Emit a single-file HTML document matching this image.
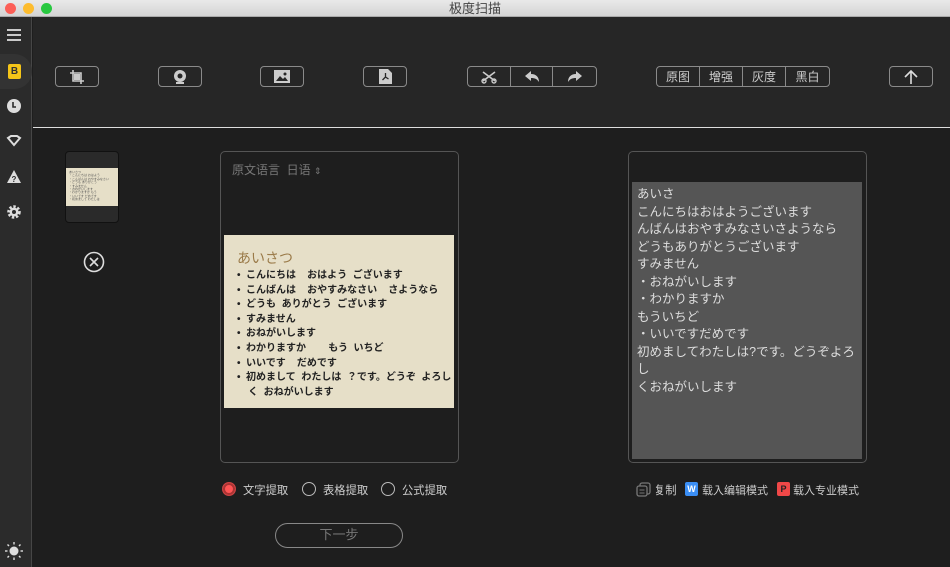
<!DOCTYPE html>
<html><head><meta charset="utf-8"><style>
*{margin:0;padding:0;box-sizing:border-box}
body{width:950px;height:567px;overflow:hidden;background:#1e1e1e;font-family:"Liberation Sans","Noto Sans CJK JP",sans-serif;position:relative}
.a{position:absolute}
.btn{position:absolute;top:66px;height:21px;border:1.5px solid #8a8a8a;border-radius:4px;display:flex;align-items:center;justify-content:center}
.seg{display:flex;align-items:center;justify-content:center;height:100%;border-right:1px solid #8a8a8a;color:#ccc;font-size:12px}
.seg:last-child{border-right:none}
.jp{font-size:10px;font-weight:bold;color:#222;line-height:14.6px;white-space:pre}
.rt{color:#ddd;font-size:12.5px;line-height:17.5px;white-space:nowrap}
.radio{position:absolute;top:482px;width:14px;height:14px;border-radius:50%;border:1.5px solid #bbb}
.lbl{position:absolute;top:482px;color:#ccc;font-size:11.3px}
</style></head><body>
<div class="a" style="left:0;top:0;width:950px;height:17px;background:linear-gradient(#e9e9e9,#d4d4d4);border-bottom:1px solid #aaa"></div>
<div class="a" style="left:5px;top:3px;width:11px;height:11px;border-radius:50%;background:#fc5f57"></div>
<div class="a" style="left:23px;top:3px;width:11px;height:11px;border-radius:50%;background:#fdbc2e"></div>
<div class="a" style="left:41px;top:3px;width:11px;height:11px;border-radius:50%;background:#28c840"></div>
<div class="a" style="left:0;top:0;width:950px;text-align:center;font-size:13px;color:#444;line-height:17px">极度扫描</div>

<div class="a" style="left:0;top:17px;width:32px;height:550px;background:#2b2b2b;border-right:1px solid #464646"></div>
<div class="a" style="left:0;top:54px;width:32px;height:35px;background:#333;border-radius:0 18px 18px 0"></div>
<div class="a" style="left:33px;top:17px;width:917px;height:110px;background:#262626"></div>
<div class="a" style="left:33px;top:127px;width:917px;height:1px;background:#ddd"></div>

<svg class="a" style="left:6px;top:28px" width="20" height="14"><g stroke="#ddd" stroke-width="1.8"><line x1="1" y1="2" x2="15" y2="2"/><line x1="1" y1="7" x2="15" y2="7"/><line x1="1" y1="12" x2="15" y2="12"/></g></svg>
<div class="a" style="left:8px;top:64px;width:13px;height:15px;background:#f5c518;border-radius:2px;font-size:10px;font-weight:bold;color:#333;text-align:center;line-height:15px">B</div>
<svg class="a" style="left:6px;top:98px" width="16" height="16"><circle cx="8" cy="8" r="7" fill="#ddd"/><path d="M7 4v5h3" stroke="#2b2b2b" stroke-width="1.6" fill="none"/></svg>
<svg class="a" style="left:6px;top:135px" width="16" height="12"><path d="M2 3l3-2h6l3 2-6 7z" fill="none" stroke="#ddd" stroke-width="2"/></svg>
<svg class="a" style="left:6px;top:169px" width="16" height="16"><path d="M8 1l7 13H1z" fill="#ddd"/><text x="8" y="13" font-size="8" text-anchor="middle" fill="#2b2b2b" font-weight="bold">?</text></svg>
<svg class="a" style="left:6px;top:204px" width="16" height="16"><circle cx="8" cy="8" r="5" fill="none" stroke="#ddd" stroke-width="3.5" stroke-dasharray="2.2 1.6"/><circle cx="8" cy="8" r="4.5" fill="#ddd"/><circle cx="8" cy="8" r="2" fill="#2b2b2b"/></svg>
<svg class="a" style="left:5px;top:542px" width="18" height="18"><circle cx="9" cy="9" r="4.5" fill="#ddd"/><g stroke="#ddd" stroke-width="1.4"><line x1="9" y1="0" x2="9" y2="2.5"/><line x1="9" y1="15.5" x2="9" y2="18"/><line x1="0" y1="9" x2="2.5" y2="9"/><line x1="15.5" y1="9" x2="18" y2="9"/><line x1="2.5" y1="2.5" x2="4" y2="4"/><line x1="14" y1="14" x2="15.5" y2="15.5"/><line x1="2.5" y1="15.5" x2="4" y2="14"/><line x1="14" y1="4" x2="15.5" y2="2.5"/></g></svg>

<div class="btn" style="left:55px;width:44px"><svg width="16" height="16"><path d="M4 1v11h11M1 4h11v11" fill="none" stroke="#ccc" stroke-width="1.6"/><rect x="5" y="5" width="6" height="6" fill="#ccc"/></svg></div>
<div class="btn" style="left:158px;width:44px"><svg width="14" height="16"><circle cx="7" cy="7" r="6" fill="#ccc"/><circle cx="7" cy="7" r="2.5" fill="#262626"/><rect x="3" y="13" width="8" height="2" fill="#ccc"/></svg></div>
<div class="btn" style="left:260px;width:44px"><svg width="16" height="14"><rect x="0" y="0" width="16" height="13" fill="#ccc"/><path d="M2 11l4-5 3 3 2-2 3 4z" fill="#262626"/><circle cx="11" cy="4" r="1.5" fill="#262626"/></svg></div>
<div class="btn" style="left:363px;width:44px"><svg width="13" height="15"><path d="M0 0h9l4 4v11H0z" fill="#ccc"/><path d="M6.5 4v4M6.5 8l-3 3M6.5 8l3 2" stroke="#262626" stroke-width="1.3"/></svg></div>
<div class="btn" style="left:467px;width:130px;justify-content:flex-start">
<div class="seg" style="width:43px"><svg width="16" height="14"><path d="M2 2l12 9M14 2L2 11" stroke="#ccc" stroke-width="1.6"/><circle cx="3" cy="11" r="2" fill="none" stroke="#ccc" stroke-width="1.4"/><circle cx="13" cy="11" r="2" fill="none" stroke="#ccc" stroke-width="1.4"/></svg></div>
<div class="seg" style="width:43px"><svg width="16" height="12"><path d="M1 5l6-5v3c5 0 8 3 8 8-2-3-4-4-8-4v3z" fill="#ccc"/></svg></div>
<div class="seg" style="width:43px"><svg width="16" height="12"><path d="M15 5L9 0v3C4 3 1 6 1 11c2-3 4-4 8-4v3z" fill="#ccc"/></svg></div>
</div>
<div class="btn" style="left:656px;width:174px;justify-content:flex-start">
<div class="seg" style="width:43px">原图</div><div class="seg" style="width:43px">增强</div><div class="seg" style="width:43px">灰度</div><div class="seg" style="width:43px">黑白</div>
</div>
<div class="btn" style="left:889px;width:44px"><svg width="14" height="16"><path d="M7 15V2M1 8l6-6 6 6" fill="none" stroke="#ddd" stroke-width="1.6"/></svg></div>

<div class="a" style="left:65px;top:151px;width:54px;height:72px;background:#2a2a2a;border:1px solid #111;border-radius:4px"></div>
<div class="a" style="left:66px;top:168px;width:52px;height:38px;background:#e6dfc8;padding:3px;font-size:3px;line-height:3.4px;color:#555;overflow:hidden">あいさつ<br>・こんにちは おはよう<br>・こんばんは おやすみなさい<br>・どうも ありがとう<br>・すみません<br>・おねがいします<br>・わかりますか もう<br>・いいです だめです<br>・初めまして わたしは</div>
<svg class="a" style="left:83px;top:251px" width="22" height="22"><circle cx="11" cy="11" r="9.5" fill="none" stroke="#ddd" stroke-width="1.6"/><path d="M7 7l8 8M15 7l-8 8" stroke="#ddd" stroke-width="1.6"/></svg>

<div class="a" style="left:220px;top:151px;width:239px;height:312px;border:1px solid #555;border-radius:5px"></div>
<div class="a" style="left:232px;top:161px;font-size:12px;color:#777">原文语言 &nbsp;日语 <span style="font-size:9px">⇕</span></div>
<div class="a" style="left:224px;top:235px;width:230px;height:173px;background:#e6dfc8;padding:14px 0 0 13px">
<div style="font-size:14px;color:#9a7a48;line-height:18px">あいさつ</div>
<div class="jp" style="margin-top:2px">•  こんにちは    おはよう  ございます
•  こんばんは    おやすみなさい    さようなら
•  どうも  ありがとう  ございます
•  すみません
•  おねがいします
•  わかりますか        もう  いちど
•  いいです    だめです
•  初めまして  わたしは  ？です。どうぞ  よろし
    く  おねがいします</div>
</div>

<div class="a" style="left:628px;top:151px;width:239px;height:312px;border:1px solid #555;border-radius:5px"></div>
<div class="a rt" style="left:632px;top:182px;width:230px;height:277px;background:#555;padding:4px 5px">あいさ<br>こんにちはおはようございます<br>んばんはおやすみなさいさようなら<br>どうもありがとうございます<br>すみません<br>・おねがいします<br>・わかりますか<br>もういちど<br>・いいですだめです<br>初めましてわたしは?です。どうぞよろ<br>し<br>くおねがいします</div>

<div class="radio" style="left:222px;border-color:#c44;background:#f55;box-shadow:inset 0 0 0 2px #a33"></div>
<div class="lbl" style="left:243px">文字提取</div>
<div class="radio" style="left:302px"></div>
<div class="lbl" style="left:323px">表格提取</div>
<div class="radio" style="left:381px"></div>
<div class="lbl" style="left:402px">公式提取</div>
<div class="a" style="left:275px;top:523px;width:128px;height:25px;border:1.5px solid #888;border-radius:13px;color:#777;font-size:13px;text-align:center;line-height:22px">下一步</div>

<svg class="a" style="left:636px;top:482px" width="15" height="15"><rect x="4" y="1" width="10" height="11" rx="2" fill="none" stroke="#777" stroke-width="1.3"/><rect x="1" y="4" width="10" height="10" rx="2" fill="#1e1e1e" stroke="#777" stroke-width="1.3"/><path d="M3.5 8h5M3.5 11h5" stroke="#777"/></svg>
<div class="lbl" style="left:654px">复制</div>
<div class="a" style="left:685px;top:482px;width:13px;height:14px;background:#3a8ef5;border-radius:2px;color:#fff;font-size:9px;font-weight:bold;text-align:center;line-height:14px">W</div>
<div class="lbl" style="left:702px;font-size:11px">载入编辑模式</div>
<div class="a" style="left:777px;top:482px;width:13px;height:14px;background:#f04848;border-radius:2px;color:#222;font-size:9px;font-weight:bold;text-align:center;line-height:14px">P</div>
<div class="lbl" style="left:793px;font-size:11px">载入专业模式</div>
</body></html>
